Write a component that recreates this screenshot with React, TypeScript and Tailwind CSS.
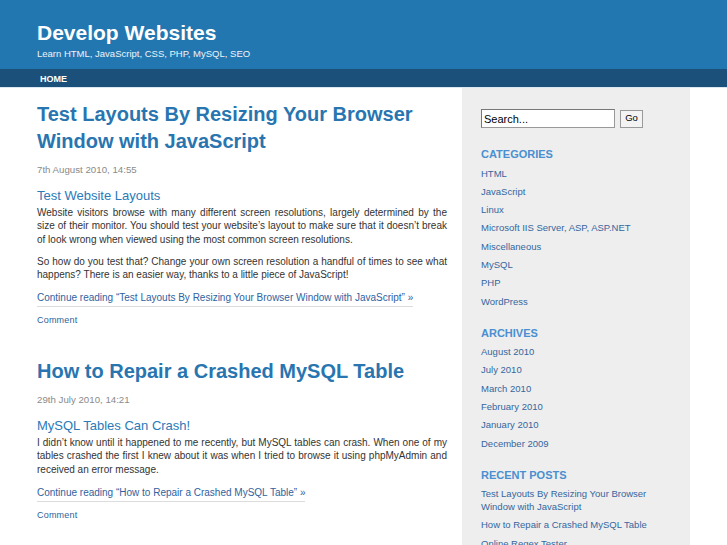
import React from 'react';

const categories = [
  'HTML',
  'JavaScript',
  'Linux',
  'Microsoft IIS Server, ASP, ASP.NET',
  'Miscellaneous',
  'MySQL',
  'PHP',
  'WordPress',
];

const archives = ['August 2010', 'July 2010', 'March 2010', 'February 2010', 'January 2010', 'December 2009'];

const recent = [
  'Test Layouts By Resizing Your Browser Window with JavaScript',
  'How to Repair a Crashed MySQL Table',
  'Online Regex Tester',
];

type Post = {
  title: React.ReactNode;
  date: string;
  heading: string;
  paragraphs: string[];
  more: string;
};

const posts: Post[] = [
  {
    title: (
      <>
        Test Layouts By Resizing Your Browser
        <br />
        Window with JavaScript
      </>
    ),
    date: '7th August 2010, 14:55',
    heading: 'Test Website Layouts',
    paragraphs: [
      'Website visitors browse with many different screen resolutions, largely determined by the size of their monitor. You should test your website\u2019s layout to make sure that it doesn\u2019t break of look wrong when viewed using the most common screen resolutions.',
      'So how do you test that? Change your own screen resolution a handful of times to see what happens? There is an easier way, thanks to a little piece of JavaScript!',
    ],
    more: 'Continue reading \u201cTest Layouts By Resizing Your Browser Window with JavaScript\u201d \u00bb',
  },
  {
    title: 'How to Repair a Crashed MySQL Table',
    date: '29th July 2010, 14:21',
    heading: 'MySQL Tables Can Crash!',
    paragraphs: [
      'I didn\u2019t know until it happened to me recently, but MySQL tables can crash. When one of my tables crashed the first I knew about it was when I tried to browse it using phpMyAdmin and received an error message.',
    ],
    more: 'Continue reading \u201cHow to Repair a Crashed MySQL Table\u201d \u00bb',
  },
];

function PostEntry({ post, first }: { post: Post; first?: boolean }) {
  return (
    <div className={first ? 'mt-[13px]' : 'mt-[31px]'}>
      <h2 className="text-[20px] font-bold leading-[27px] text-[#2875b0]">{post.title}</h2>
      <p className="mt-[8px] text-[9.7px] leading-[14px] text-[#8a8a8a]">{post.date}</p>
      <h3 className="mt-[11px] text-[13px] leading-[16px] text-[#2a7ab8]">{post.heading}</h3>
      {post.paragraphs.map((p, i) => (
        <p
          key={i}
          className={`${i === 0 ? 'mt-[1.5px]' : 'mt-[8px]'} text-justify text-[10px] leading-[13.7px] text-[#333]`}
        >
          {p}
        </p>
      ))}
      <div className="mt-[9px] flex">
        <a className="block border-b border-[#dcdcdc] pb-[1px] text-[10px] leading-[14px] text-[#2f62a0]">
          {post.more}
        </a>
      </div>
      <p className="mt-[6px] text-[9px] leading-[14px] tracking-[0.2px] text-[#2f5f98]">Comment</p>
    </div>
  );
}

function SideList({ title, items, top }: { title: string; items: string[]; top: string }) {
  return (
    <div className={top}>
      <h4 className="text-[11px] font-bold leading-[14px] text-[#4a8fd0]">{title}</h4>
      <ul className="mt-[5.5px] flex flex-col gap-[5.3px]">
        {items.map((it) => (
          <li key={it} className="text-[9.5px] leading-[13px] text-[#35669e]">
            {it}
          </li>
        ))}
      </ul>
    </div>
  );
}

export default function App() {
  return (
    <div className="min-h-[545px] w-[727px] overflow-hidden bg-white font-['Liberation_Sans',Arial,sans-serif]">
      <header className="h-[69px] bg-[#2377b1] px-[37px] pt-[20px]">
        <h1 className="text-[21px] font-bold leading-[25px] text-white">Develop Websites</h1>
        <p className="mt-[3px] text-[9.5px] leading-[12px] text-[#eef4fa]">
          Learn HTML, JavaScript, CSS, PHP, MySQL, SEO
        </p>
      </header>
      <nav className="flex h-[19px] items-center border-b border-[#dbe8f2] bg-[#1a5079] pl-[40px]">
        <span className="block pt-[1px] text-[9px] font-bold leading-[12px] text-white">HOME</span>
      </nav>
      <div className="flex h-[457px] overflow-hidden pl-[37px]">
        <main className="w-[410px]">
          {posts.map((p, i) => (
            <PostEntry key={i} post={p} first={i === 0} />
          ))}
        </main>
        <aside className="ml-[15px] w-[228px] bg-[#eeeeee] px-[19px] pt-[21px]">
          <div className="flex items-center gap-[5px]">
            <input
              defaultValue="Search..."
              className="h-[19px] w-[134px] border border-[#999] border-t-[#777] border-l-[#777] bg-white px-[2px] text-[11px] text-black outline-none"
            />
            <button className="h-[18px] w-[23px] border border-[#999] bg-[#f3f3f3] text-[9.5px] text-black">Go</button>
          </div>
          <SideList title="CATEGORIES" items={categories} top="mt-[19px]" />
          <SideList title="ARCHIVES" items={archives} top="mt-[18px]" />
          <SideList title="RECENT POSTS" items={recent} top="mt-[18px]" />
        </aside>
      </div>
    </div>
  );
}
